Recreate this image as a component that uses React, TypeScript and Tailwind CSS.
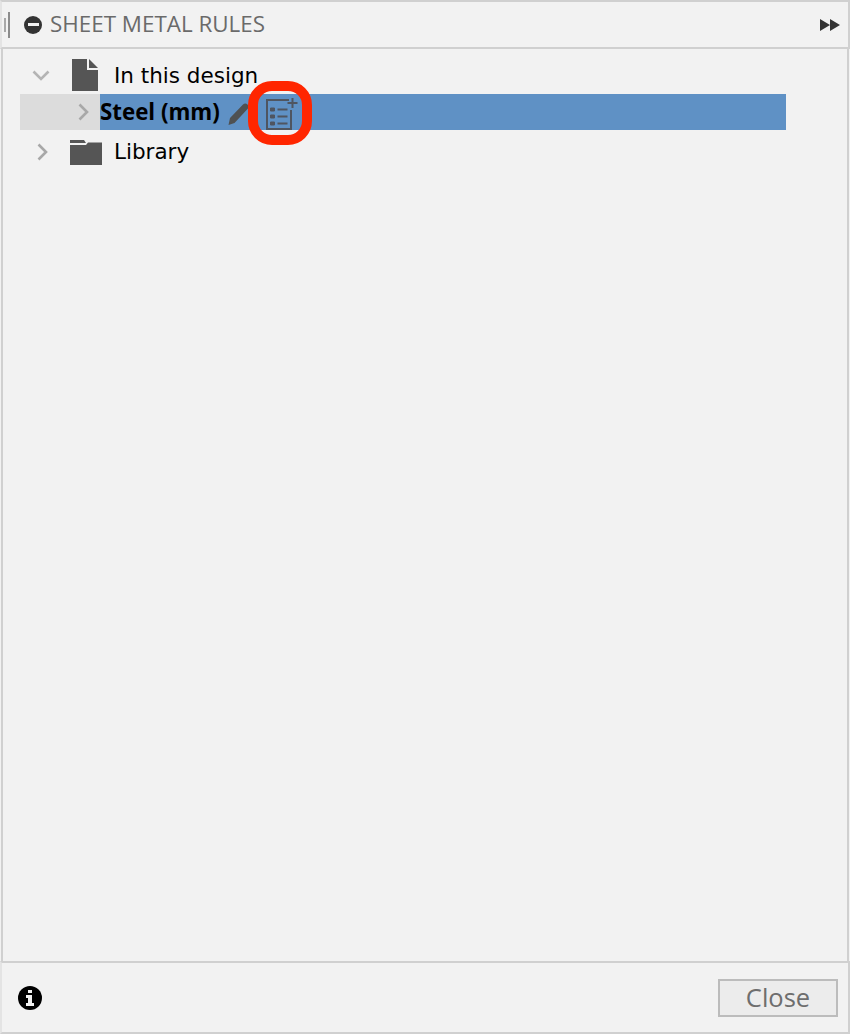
function ChevronDown() {
  return (
    <svg width="18" height="12" viewBox="0 0 18 12" className="shrink-0">
      <path d="M1.5 1.5 9 9l7.5-7.5" fill="none" stroke="#b4b4b4" strokeWidth="2.6" />
    </svg>
  );
}

function ChevronRight() {
  return (
    <svg width="12" height="18" viewBox="0 0 12 18" className="shrink-0">
      <path d="M1.5 1.5 9 9l-7.5 7.5" fill="none" stroke="#a8a8a8" strokeWidth="2.6" />
    </svg>
  );
}

function DocIcon() {
  return (
    <svg width="26" height="32" viewBox="0 0 26 32" className="shrink-0">
      <path d="M0 0h15v11h11v21H0z" fill="#555555" />
      <path d="M17 0l9 9h-9z" fill="#555555" />
    </svg>
  );
}

function FolderIcon() {
  return (
    <svg width="32" height="25" viewBox="0 0 32 25" className="shrink-0">
      <path d="M0 0h14l2 3H0z" fill="#555555" />
      <path d="M0 5h16l2-2.500h14V25H0z" fill="#555555" />
    </svg>
  );
}

function PencilIcon() {
  return (
    <svg width="22" height="24" viewBox="0 0 22 24" className="shrink-0">
      <path d="M0.500 23 2 16 15 2.500c1.500-1.500 3-1.500 4.500 0s1.500 3 0 4.500L6.500 21z" fill="#4f5152" />
    </svg>
  );
}

function RuleListIcon() {
  return (
    <svg width="33" height="32" viewBox="0 0 33 32" className="shrink-0" fill="none" stroke="#4f5560">
      <path d="M23 2H1v29h24V12" strokeWidth="2" />
      <path d="M26.500 0v10M21.500 5h10" strokeWidth="2" />
      <path d="M4.500 10h4v3h-4zM4.500 17h4v3h-4zM4.500 24h4v3h-4z" fill="#4f5560" strokeWidth="1" />
      <path d="M11.500 11.500h10M11.500 18.500h10M11.500 25.500h10" strokeWidth="2" />
    </svg>
  );
}

export default function App() {
  return (
    <div
      className="relative flex h-[1034px] w-[850px] flex-col bg-[#f2f2f2]"
      style={{ fontFamily: '"DejaVu Sans", sans-serif' }}
    >
      <header className="flex h-[49px] w-[850px] items-center border-2 border-[#d0d0d0] border-l-[#e4e4e4] pl-[2px] pr-[8px]">
        <div className="flex items-center gap-[2px]">
          <span className="h-[14px] w-[2px] bg-[#a8a8a8]" />
          <span className="h-[26px] w-[2px] bg-[#8c8c8c]" />
        </div>
        <span className="ml-[14px] flex h-[18px] w-[18px] items-center justify-center rounded-full bg-[#333333]">
          <span className="h-[3px] w-[11px] bg-[#f2f2f2]" />
        </span>
        <h1 className="ml-[8px] text-[22.4px] leading-none text-[#6a6a6a] [font-family:'Open_Sans',sans-serif]">
          SHEET METAL RULES
        </h1>
        <svg width="20" height="12" viewBox="0 0 20 12" className="ml-auto">
          <path d="M0 0l10 6-10 6zM10 0l10 6-10 6z" fill="#333333" />
        </svg>
      </header>

      <main className="ml-[1px] mr-[1px] flex-1 border-x-2 border-[#d0d0d0] pt-[9px] text-[21.5px] leading-none text-black">
        <div className="flex h-[36px] items-center">
          <span className="ml-[29px]"><ChevronDown /></span>
          <span className="ml-[22px] -translate-y-[1px]"><DocIcon /></span>
          <span className="ml-[16px]">In this design</span>
        </div>
        <div className="ml-[17px] mr-[61px] flex h-[36px] items-center bg-[#5f91c5]">
          <div className="flex h-full w-[80px] items-center bg-[#dcdcdc] pl-[58px]">
            <ChevronRight />
          </div>
          <span className="w-[120px] whitespace-nowrap text-[22.3px] font-bold [font-family:'Open_Sans',sans-serif]">Steel (mm)</span>
          <span className="ml-[8px] mt-[3px]"><PencilIcon /></span>
          <span className="ml-[16px] mt-[3px]"><RuleListIcon /></span>
        </div>
        <div className="mt-[4px] flex h-[36px] items-center">
          <span className="ml-[34px]"><ChevronRight /></span>
          <span className="ml-[21px]"><FolderIcon /></span>
          <span className="ml-[12px]">Library</span>
        </div>
      </main>

      <footer className="flex h-[73px] w-[850px] items-center justify-between border-2 border-[#d0d0d0] border-l-[#e4e4e4] pl-[16px] pr-[10px]">
        <span className="flex h-[24px] w-[24px] items-center justify-center rounded-full bg-black">
          <svg width="8" height="16" viewBox="0 0 8 16">
            <path d="M2 0h4v3H2zM0 5h6v8h2v3H0v-3h2V8H0z" fill="#f2f2f2" />
          </svg>
        </span>
        <button className="h-[38px] w-[120px] border-2 border-[#bcbcbc] bg-[#ececec] text-[25.5px] leading-none text-[#6e6e6e] [font-family:'Open_Sans',sans-serif]">
          Close
        </button>
      </footer>

      <div className="absolute left-[248px] top-[81px] h-[64px] w-[64px] rounded-[24px] border-[10px] border-[#ff2600]" />
    </div>
  );
}
